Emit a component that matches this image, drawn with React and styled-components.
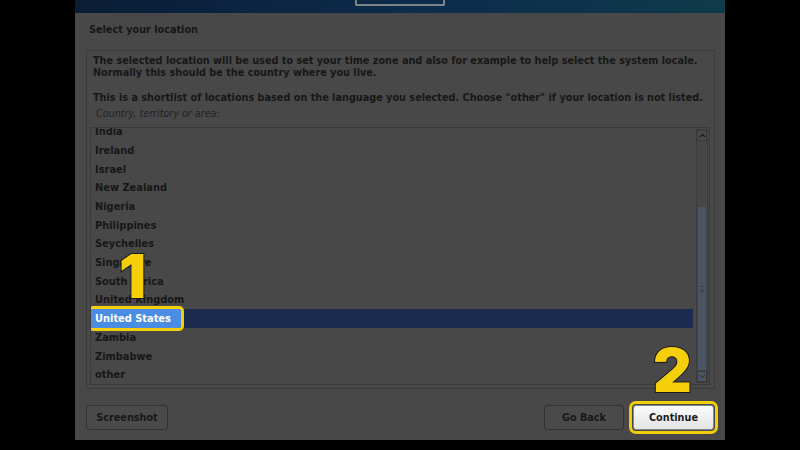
import React from "react";
import styled, { createGlobalStyle } from "styled-components";

const GlobalStyle = createGlobalStyle`
  html, body {
    margin: 0;
    padding: 0;
    background: #000;
  }
  * {
    box-sizing: border-box;
  }
`;

const Page = styled.div`
  width: 800px;
  height: 450px;
  display: flex;
  justify-content: center;
  background: #000;
  font-family: "DejaVu Sans", "Liberation Sans", sans-serif;
  color: #171717;
`;

const Window = styled.div`
  position: relative;
  width: 650px;
  height: 440px;
  background: #484848;
  display: flex;
  flex-direction: column;
`;

const Banner = styled.div`
  height: 13px;
  display: flex;
  justify-content: center;
  background: linear-gradient(90deg, #0a1d35 0%, #0d2c4c 55%, #0e3b4a 100%);
`;

const LogoFrame = styled.div`
  width: 90px;
  height: 6px;
  border: 2px solid #7b8487;
  border-top: none;
  border-radius: 0 0 2px 2px;
`;

const Title = styled.div`
  padding: 11px 0 0 14px;
  font-size: 9.7px;
  font-weight: bold;
  line-height: 12px;
`;

const Frame = styled.div`
  margin: 14px 10px 0 11px;
  padding: 4px 4px 3px 3px;
  border: 1px solid #3a3a3a;
  display: flex;
  flex-direction: column;
`;

const Para = styled.p`
  margin: 0 0 ${(p) => p.$gap || 0}px;
  padding-left: 3px;
  font-size: 9.7px;
  font-weight: bold;
  line-height: 12px;
  white-space: nowrap;
`;

const Label = styled.div`
  padding-left: 6px;
  margin-top: 4px;
  font-size: 9.6px;
  font-style: italic;
  line-height: 12px;
  color: #232323;
`;

const ListBox = styled.div`
  margin-top: 7px;
  height: 258px;
  border: 1px solid #3a3a3a;
  display: grid;
  grid-template-columns: 1fr 12px;
  column-gap: 3px;
  padding-right: 1px;
  overflow: hidden;
`;

const Rows = styled.div`
  margin-top: -5.6px;
  display: flex;
  flex-direction: column;
`;

const Row = styled.div`
  height: 18.7px;
  flex: none;
  display: flex;
  align-items: center;
  padding-left: ${(p) => (p.$selected ? 0 : 4)}px;
  font-size: 9.85px;
  font-weight: bold;
  background: ${(p) => (p.$selected ? "#1b2c50" : "transparent")};
`;

const Highlight = styled.span`
  height: 100%;
  display: flex;
  align-items: center;
  padding: 0 10px 0 4px;
  background: #4a8de2;
  color: #fff;
  border-radius: 2px;
  outline: 3px solid #f3cf08;
  outline-offset: 0;
`;

const Scrollbar = styled.div`
  margin: 1px 0;
  border: 1px solid #3c3c3c;
  background: #464646;
  display: flex;
  flex-direction: column;
`;

const Arrow = styled.div`
  height: 11px;
  flex: none;
  display: flex;
  align-items: center;
  justify-content: center;
  border: 1px solid #3a3a3a;
  background: ${(p) => (p.$thumb ? "#4a5561" : "#4a4a4a")};
`;

const Track = styled.div`
  flex: 1;
  display: flex;
  flex-direction: column;
`;

const Thumb = styled.div`
  margin-top: 65px;
  flex: 1;
  background: #4a5561;
  border: 1px solid #3e4752;
  display: flex;
  align-items: center;
  justify-content: center;
`;

const Grip = styled.div`
  width: 4px;
  height: 6px;
  border-top: 1px solid #3a434c;
  border-bottom: 1px solid #3a434c;
  position: relative;
  &::after {
    content: "";
    position: absolute;
    left: 0;
    right: 0;
    top: 2px;
    border-top: 1px solid #3a434c;
  }
`;

const ButtonBar = styled.div`
  margin-top: 16px;
  padding: 0 11px;
  display: flex;
  align-items: center;
`;

const Button = styled.div`
  width: ${(p) => p.$w || 81}px;
  height: 25px;
  display: flex;
  align-items: center;
  justify-content: center;
  border: 1px solid ${(p) => (p.$primary ? "#7f8a96" : "#323232")};
  border-radius: 3px;
  background: ${(p) =>
    p.$primary ? "linear-gradient(#fbfbfb, #e4e4e4)" : "#4a4a4a"};
  font-size: 9.7px;
  font-weight: bold;
  color: ${(p) => (p.$primary ? "#1c1c1c" : "#181818")};
  margin-left: ${(p) => p.$ml || 0}px;
  ${(p) => p.$primary && "outline: 3px solid #f3cf08; outline-offset: 1px;"}
`;

const Spacer = styled.div`
  flex: 1;
`;

const Marker = styled.div`
  position: absolute;
  left: ${(p) => p.$x}px;
  top: ${(p) => p.$y}px;
  font-family: "Inter", "Liberation Sans", sans-serif;
  font-weight: 900;
  font-size: 60px;
  line-height: 1;
  color: #f4cf0a;
  -webkit-text-stroke: 2px #1c1c1c;
  paint-order: stroke fill;
`;

const countries = [
  "India",
  "Ireland",
  "Israel",
  "New Zealand",
  "Nigeria",
  "Philippines",
  "Seychelles",
  "Singapore",
  "South Africa",
  "United Kingdom",
  "United States",
  "Zambia",
  "Zimbabwe",
  "other",
];

const Chevron = ({ down }) => (
  <svg width="7" height="5" viewBox="0 0 7 5">
    <path
      d={down ? "M1 1 L3.5 3.5 L6 1" : "M1 4 L3.5 1.5 L6 4"}
      fill="none"
      stroke={down ? "#3a3f44" : "#1a1a1a"}
      strokeWidth="1.4"
    />
  </svg>
);

const App = () => {
  return (
    <Page>
      <GlobalStyle />
      <Window>
        <Banner>
          <LogoFrame />
        </Banner>
        <Title>Select your location</Title>
        <Frame>
          <Para $gap={13}>
            The selected location will be used to set your time zone and also
            for example to help select the system locale.
            <br />
            Normally this should be the country where you live.
          </Para>
          <Para>
            This is a shortlist of locations based on the language you
            selected. Choose "other" if your location is not listed.
          </Para>
          <Label>Country, territory or area:</Label>
          <ListBox>
            <Rows>
              {countries.map((c) =>
                c === "United States" ? (
                  <Row key={c} $selected>
                    <Highlight>{c}</Highlight>
                  </Row>
                ) : (
                  <Row key={c}>{c}</Row>
                )
              )}
            </Rows>
            <Scrollbar>
              <Arrow>
                <Chevron />
              </Arrow>
              <Track>
                <Thumb>
                  <Grip />
                </Thumb>
              </Track>
              <Arrow $thumb>
                <Chevron down />
              </Arrow>
            </Scrollbar>
          </ListBox>
        </Frame>
        <ButtonBar>
          <Button $w={82}>Screenshot</Button>
          <Spacer />
          <Button $w={80}>Go Back</Button>
          <Button $primary $ml={9}>
            Continue
          </Button>
        </ButtonBar>
        <Marker $x={44} $y={246}>
          1
        </Marker>
        <Marker $x={578} $y={340}>
          2
        </Marker>
      </Window>
    </Page>
  );
};

export default App;
